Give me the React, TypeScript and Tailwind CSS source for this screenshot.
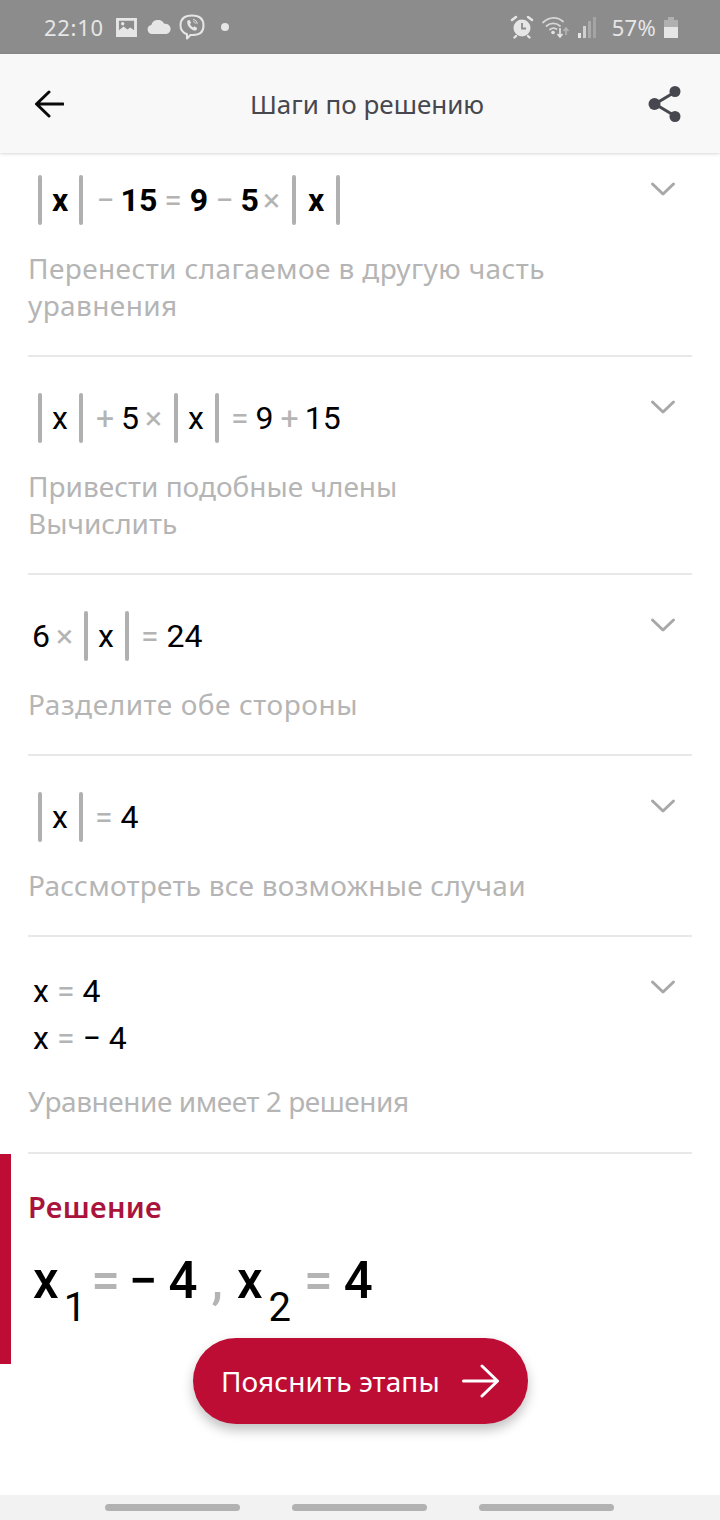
import type { ReactNode } from 'react'

const bodyFont = "font-['Noto_Sans',sans-serif]"

function Bar() {
  return <span className="h-[50px] w-1 shrink-0 rounded-full bg-[#b0b0b0]" />
}

function Op({ children, className = '' }: { children: ReactNode; className?: string }) {
  return <span className={`text-[#b4b4b4] ${className}`}>{children}</span>
}

function Abs({ bold, pad = 'pl-[10px] pr-[11px]' }: { bold?: boolean; pad?: string }) {
  return (
    <span className="flex items-center">
      <Bar />
      <span className={`${pad} ${bold ? 'font-bold' : ''}`}>x</span>
      <Bar />
    </span>
  )
}

function Chevron() {
  return (
    <svg width="26" height="16" viewBox="0 0 26 16" fill="none" className="shrink-0">
      <path d="M2.500 3 L13 13 L23.500 3" stroke="#a8a8a8" strokeWidth="3" strokeLinecap="round" strokeLinejoin="round" />
    </svg>
  )
}

function Step({
  math,
  lines,
  mathClass,
  textClass = 'tracking-[0.4px]',
  sectionClass = 'pb-[31px]',
  chevronClass = 'top-[42px]',
}: {
  math: ReactNode
  lines: string[]
  mathClass: string
  textClass?: string
  sectionClass?: string
  chevronClass?: string
}) {
  return (
    <section className={`relative flex flex-col border-b-2 border-[#e8e8e8] ${sectionClass}`}>
      <div className={`font-['Roboto',sans-serif] text-[32px] leading-[50px] text-black ${mathClass}`}>{math}</div>
      <div className={`${bodyFont} text-[28px] leading-[37px] text-[#b5b5b5] ${textClass}`}>
        {lines.map((l) => (
          <p key={l}>{l}</p>
        ))}
      </div>
      <div className={`absolute right-[16px] ${chevronClass}`}>
        <Chevron />
      </div>
    </section>
  )
}

function StatusBar() {
  return (
    <div className={`flex h-[54px] items-center justify-between bg-[#8c8c8c] pl-[44px] pr-[42px] text-[#e6e6e6] ${bodyFont}`}>
      <div className="flex items-center">
        <span className="text-[22px] leading-none tracking-[0.7px]">22:10</span>
        <svg width="21" height="19" viewBox="0 0 22 20" className="ml-[12px]">
          <path fill="#e6e6e6" fillRule="evenodd" d="M0 0h22v20H0z M3 3v10l5-4 4 3 3-2 4 3V3z" />
          <circle cx="7" cy="6" r="1.800" fill="#e6e6e6" />
        </svg>
        <svg width="24" height="14" viewBox="0 0 24 14" className="ml-[10px]">
          <path fill="#e6e6e6" d="M5 14a4.600 4.600 0 0 1-.7-9.100 7 7 0 0 1 13-1.100A5.200 5.200 0 0 1 19.500 14z" />
        </svg>
        <svg width="26" height="26" viewBox="0 0 26 26" fill="none" className="ml-[8px]">
          <path stroke="#e6e6e6" strokeWidth="2" strokeLinejoin="round" d="M13 1.500c6.500 0 11.500 2.500 11.500 10 0 7-4.500 9.500-10.500 9.500h-2.500l-3.500 3.500v-4.200C4 18.800 1.500 16 1.500 11.500c0-7.500 5-10 11.500-10z" />
          <path fill="#e6e6e6" d="M8.500 6.500l2-.5 1.700 2.800-1.200 1.200c.5 1.500 1.700 2.800 3.300 3.500l1.200-1.200 2.600 1.800-.6 1.900c-1 .8-2.400.7-3.800-.1-2.800-1.600-4.800-3.900-5.400-6.500-.2-1.200 0-2.200.2-2.900z" />
          <path stroke="#e6e6e6" strokeWidth="1" d="M14 5.500c2.500.2 4 1.800 4.200 4.300M14.300 7.500c1.200.1 1.900.9 2 2.100" />
        </svg>
        <span className="ml-[16px] h-[8px] w-[8px] rounded-full bg-[#e6e6e6]" />
      </div>
      <div className="flex items-center">
        <svg width="24" height="24" viewBox="0 0 24 24" fill="none">
          <circle cx="12" cy="13" r="8.500" fill="#e6e6e6" />
          <path stroke="#8c8c8c" strokeWidth="1.800" d="M12 8v5.500h4" />
          <path stroke="#e6e6e6" strokeWidth="2.400" strokeLinecap="round" d="M2 5l4-3M22 5l-4-3M6 21l-1.500 1.500M18 21l1.500 1.500" />
        </svg>
        <svg width="28" height="24" viewBox="0 0 28 24" fill="none" className="ml-[8px]">
          <path stroke="#d6d6d6" strokeWidth="1.800" strokeLinecap="round" d="M1 7.500C7.500 1.500 15.500 1.500 21 6.500M4.500 11c4-3.500 9.500-3.500 13.500 0M8 14.500c2-1.700 4.500-1.700 6.500-.5" />
          <circle cx="11" cy="17.500" r="1.800" fill="#e6e6e6" />
          <path stroke="#e6e6e6" strokeWidth="1.600" d="M18 13v9M15.500 19l2.500 3 2.500-3" />
          <path stroke="#b4b4b4" strokeWidth="1.600" d="M24 20v-7M21.500 16l2.500-3 2.500 3" />
        </svg>
        <div className="ml-[8px] flex h-[22px] items-end gap-[2px]">
          <span className="h-[5px] w-[3px] bg-[#e6e6e6]" />
          <span className="h-[12px] w-[3px] bg-[#d0d0d0]" />
          <span className="h-[17px] w-[3px] bg-[#aaaaaa]" />
          <span className="h-[21px] w-[3px] bg-[#a4a4a4]" />
        </div>
        <span className="ml-[16px] text-[22px] leading-none tracking-[0.3px]">57%</span>
        <div className="ml-[8px] flex flex-col items-center">
          <span className="h-[3px] w-[6px] bg-[#b0b0b0]" />
          <span className="flex h-[18px] w-[14px] flex-col bg-[#b0b0b0]">
            <span className="mt-auto h-[11px] bg-[#e6e6e6]" />
          </span>
        </div>
      </div>
    </div>
  )
}

function AppBar() {
  return (
    <header className="relative z-10 flex h-[99px] items-center justify-between bg-[#f8f8f8] pl-[34px] pr-[38px] shadow-[0_1px_3px_rgba(0,0,0,0.16)]">
      <svg width="30" height="28" viewBox="0 0 30 28" fill="none">
        <path stroke="#0a0a0a" strokeWidth="3" strokeLinecap="round" strokeLinejoin="round" d="M29 14H3M15 2L2.500 14 15 26" />
      </svg>
      <h1 className={`${bodyFont} ml-[22px] text-[26px] font-normal leading-none text-[#47474f]`}>Шаги по решению</h1>
      <svg width="34" height="38" viewBox="0 0 34 38" fill="#47474f" stroke="#47474f">
        <path strokeWidth="3" fill="none" d="M27 7L7 19l20 12" />
        <circle cx="27" cy="6.500" r="5.500" stroke="none" />
        <circle cx="6.500" cy="19" r="6" stroke="none" />
        <circle cx="27" cy="31.500" r="5.500" stroke="none" />
      </svg>
    </header>
  )
}

export default function App() {
  return (
    <div className="flex h-[1520px] w-[720px] flex-col overflow-hidden bg-white">
      <StatusBar />
      <AppBar />
      <main className="relative flex-1 overflow-hidden">
        <div className="flex flex-col px-[28px]">
          <Step
            chevronClass="top-[28px]"
            mathClass="flex pb-[25px] pl-[10px] pt-[22px]"
            lines={['Перенести слагаемое в другую часть', 'уравнения']}
            math={
              <span className="flex items-center font-bold">
                <Abs bold />
                <Op className="ml-[13px] font-normal">−</Op>
                <span className="ml-[6px]">15</span>
                <Op className="ml-[7px] font-normal">=</Op>
                <span className="ml-[8px]">9</span>
                <Op className="ml-[7px] font-normal">−</Op>
                <span className="ml-[7px]">5</span>
                <Op className="ml-[4px] font-normal">×</Op>
                <span className="ml-[12px]"><Abs bold pad="px-[12px]" /></span>
              </span>
            }
          />
          <Step
            textClass="tracking-normal"
            mathClass="flex pb-[25px] pl-[10px] pt-[36px]"
            lines={['Привести подобные члены', 'Вычислить']}
            math={
              <span className="flex items-center">
                <Abs />
                <Op className="ml-[13px]">+</Op>
                <span className="ml-[7px]">5</span>
                <Op className="ml-[6px]">×</Op>
                <span className="ml-[12px]"><Abs /></span>
                <Op className="ml-[12px]">=</Op>
                <span className="ml-[7px]">9</span>
                <Op className="ml-[7px]">+</Op>
                <span className="ml-[6px]">15</span>
              </span>
            }
          />
          <Step
            textClass="tracking-[0.55px]"
            mathClass="flex pb-[25px] pl-[4px] pt-[36px]"
            lines={['Разделите обе стороны']}
            math={
              <span className="flex items-center">
                <span>6</span>
                <Op className="ml-[6px]">×</Op>
                <span className="ml-[11px]"><Abs /></span>
                <Op className="ml-[12px]">=</Op>
                <span className="ml-[8px]">24</span>
              </span>
            }
          />
          <Step
            textClass="tracking-[0.25px]"
            mathClass="flex pb-[25px] pl-[10px] pt-[36px]"
            lines={['Рассмотреть все возможные случаи']}
            math={
              <span className="flex items-center">
                <Abs />
                <Op className="ml-[12px]">=</Op>
                <span className="ml-[8px]">4</span>
              </span>
            }
          />
          <Step
            textClass="tracking-[-0.45px]"
            sectionClass="pb-[32px]"
            mathClass="flex flex-col pb-[21px] pl-[5px] pt-[31px] !leading-[47px]"
            lines={['Уравнение имеет 2 решения']}
            math={
              <>
                <span className="flex">
                  <span>x</span>
                  <Op className="ml-[8px]">=</Op>
                  <span className="ml-[8px]">4</span>
                </span>
                <span className="flex">
                  <span>x</span>
                  <Op className="ml-[8px]">=</Op>
                  <span className="ml-[8px]">−</span>
                  <span className="ml-[8px]">4</span>
                </span>
              </>
            }
          />
        </div>

        <section className="h-[210px] border-l-[11px] border-[#bd0d34] pl-[17px] pt-[33px]">
          <h2 className={`${bodyFont} text-[29px] font-semibold leading-[40px] tracking-[0.3px] text-[#a9133c]`}>Решение</h2>
          <div className="mt-[24px] flex items-start pl-[5px] font-['Roboto',sans-serif] text-[51px] font-medium leading-[60px] text-black">
            <span>x</span>
            <span className="ml-[5px] mt-[27px] text-[40px] font-normal">1</span>
            <Op className="ml-[5px]">=</Op>
            <span className="ml-[9px]">−</span>
            <span className="ml-[11px]">4</span>
            <Op className="ml-[14px]">,</Op>
            <span className="ml-[14px]">x</span>
            <span className="ml-[6px] mt-[27px] text-[40px] font-normal">2</span>
            <Op className="ml-[13px]">=</Op>
            <span className="ml-[11px]">4</span>
          </div>
        </section>

        <button
          type="button"
          className={`absolute left-[193px] top-[1185px] flex h-[86px] w-[335px] items-center rounded-[43px] bg-[#bd0d34] pl-[28px] text-white shadow-[0_6px_12px_rgba(0,0,0,0.25)] ${bodyFont}`}
        >
          <span className="text-[28px] leading-none tracking-[0.1px]">Пояснить этапы</span>
          <svg width="37" height="34" viewBox="0 0 37 34" fill="none" className="ml-[22px]">
            <path stroke="#fff" strokeWidth="3" strokeLinecap="round" strokeLinejoin="round" d="M1.500 17H35M20 2l15.500 15L20 32" />
          </svg>
        </button>
      </main>
      <nav className="flex h-[25px] items-start gap-[52px] bg-[#f2f2f2] pl-[105px] pt-[9px]">
        <span className="h-[7px] w-[135px] rounded-full bg-[#b2b2b2]" />
        <span className="h-[7px] w-[135px] rounded-full bg-[#b2b2b2]" />
        <span className="h-[7px] w-[135px] rounded-full bg-[#b2b2b2]" />
      </nav>
    </div>
  )
}
